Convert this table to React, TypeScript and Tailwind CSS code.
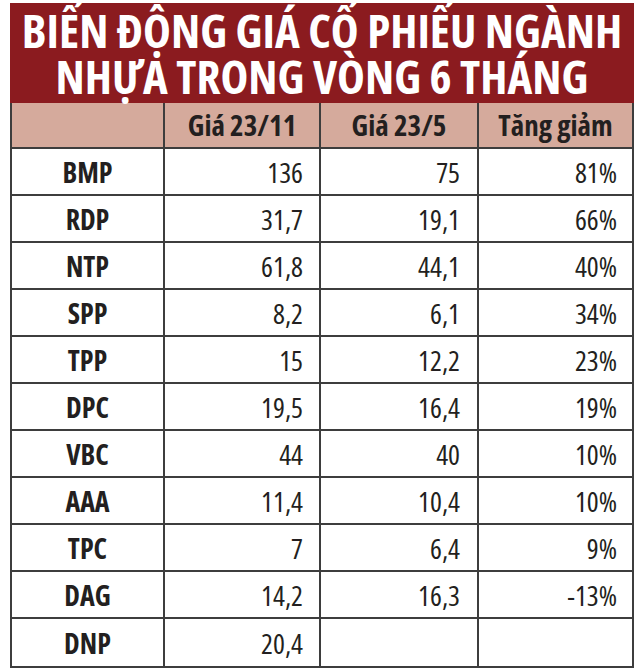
const rows: [string, string, string, string][] = [
  ["BMP", "136", "75", "81%"],
  ["RDP", "31,7", "19,1", "66%"],
  ["NTP", "61,8", "44,1", "40%"],
  ["SPP", "8,2", "6,1", "34%"],
  ["TPP", "15", "12,2", "23%"],
  ["DPC", "19,5", "16,4", "19%"],
  ["VBC", "44", "40", "10%"],
  ["AAA", "11,4", "10,4", "10%"],
  ["TPC", "7", "6,4", "9%"],
  ["DAG", "14,2", "16,3", "-13%"],
  ["DNP", "20,4", "", ""],
];

const narrow = { fontFamily: '"Open Sans", sans-serif' };

export default function App() {
  return (
    <div className="w-[640px] h-[668px] bg-white pl-[10px] pt-[3px]">
      <div className="w-[624px]">
        {/* Title */}
        <div
          className="h-[100px] bg-[#8b1b1f] flex flex-col items-center justify-center text-white font-bold text-[47px] leading-[46px] font-stretch-[87.5%] whitespace-nowrap"
          style={{ fontFamily: '"Open Sans", sans-serif' }}
        >
          <div>BIẾN ĐỘNG GIÁ CỐ PHIẾU NGÀNH</div>
          <div>NHỰA TRONG VÒNG 6 THÁNG</div>
        </div>

        {/* Table */}
        <div className="border-x-2 border-b-2 border-[#3d3d3d] text-[#231f20] font-stretch-[75%]" style={narrow}>
          <div className="grid grid-cols-[153px_156px_158px_153px] h-[46px] bg-[#d5aa9c] border-b-2 border-[#3d3d3d] text-[29px] font-bold">
            <div className="border-r-2 border-[#3d3d3d]" />
            <div className="border-r-2 border-[#3d3d3d] flex items-center justify-center">Giá 23/11</div>
            <div className="border-r-2 border-[#3d3d3d] flex items-center justify-center">Giá 23/5</div>
            <div className="flex items-center justify-center">Tăng giảm</div>
          </div>
          {rows.map((r, i) => (
            <div
              key={r[0]}
              className={`grid grid-cols-[153px_156px_158px_153px] h-[47px] text-[28px] ${
                i < rows.length - 1 ? "border-b-2 border-[#3d3d3d]" : ""
              }`}
            >
              <div className="border-r-2 border-[#3d3d3d] flex items-center justify-center font-bold">{r[0]}</div>
              <div className="border-r-2 border-[#3d3d3d] flex items-center justify-end pr-[16px]">{r[1]}</div>
              <div className="border-r-2 border-[#3d3d3d] flex items-center justify-end pr-[17px]">{r[2]}</div>
              <div className="flex items-center justify-end pr-[15px]">{r[3]}</div>
            </div>
          ))}
        </div>
      </div>
    </div>
  );
}
